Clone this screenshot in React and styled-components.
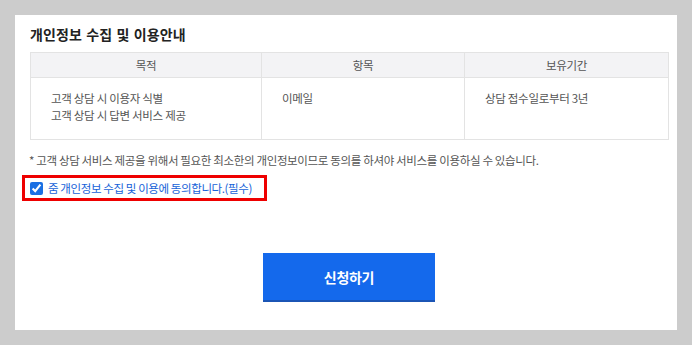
import React from "react";
import styled, { createGlobalStyle } from "styled-components";

const Global = createGlobalStyle`
  html, body { margin: 0; padding: 0; background: #cccccc; }
  body { font-family: "Noto Sans CJK KR", "Noto Sans", sans-serif; }
  * { box-sizing: border-box; }
`;

const Page = styled.div`
  padding: 15px;
  width: 692px;
  height: 345px;
`;

const Panel = styled.div`
  background: #fff;
  width: 662px;
  height: 315px;
  padding: 10px 9px 0 15px;
  display: flex;
  flex-direction: column;
`;

const Title = styled.h2`
  margin: 0 0 9px;
  font-size: 14px;
  line-height: 18px;
  font-weight: 700;
  color: #222;
  letter-spacing: 0.1px;
  word-spacing: 1px;
`;

const Table = styled.table`
  width: 638px;
  border-collapse: collapse;
  table-layout: fixed;
  font-size: 11.5px;
  color: #555;
  letter-spacing: -0.3px;
`;

const Th = styled.th`
  height: 25px;
  padding: 0;
  background: #f3f3f5;
  border: 1px solid #e3e3e3;
  font-weight: 400;
  text-align: center;
  line-height: 16px;
`;

const Td = styled.td`
  height: 62px;
  border: 1px solid #e3e3e3;
  padding: 12px 0 0 20px;
  vertical-align: top;
  line-height: 17px;
`;

const Notice = styled.p`
  margin: 12px 0 0 -1px;
  font-size: 11.5px;
  line-height: 16px;
  color: #555;
  letter-spacing: -0.35px;
`;

const AgreeBox = styled.label`
  margin: 7px 0 0 -8px;
  align-self: flex-start;
  width: 245px;
  height: 26px;
  border: 3px solid #ee0000;
  display: flex;
  align-items: center;
  gap: 5px;
  padding-left: 5px;
  font-size: 11.5px;
  color: #1662d8;
  letter-spacing: -0.4px;
  cursor: pointer;
`;

const Check = styled.input`
  width: 13px;
  height: 13px;
  margin: 0;
  accent-color: #1a6fe3;
`;

const ButtonRow = styled.div`
  width: 638px;
  display: flex;
  justify-content: center;
  margin-top: 52px;
`;

const Submit = styled.button`
  width: 172px;
  height: 49px;
  border: 0;
  border-bottom: 2px solid #1b55b5;
  background: #1469ec;
  color: #fff;
  font-family: inherit;
  font-size: 14px;
  font-weight: 700;
  letter-spacing: -0.3px;
  cursor: pointer;
`;

export default function App() {
  return (
    <>
      <Global />
      <Page>
        <Panel>
          <Title>개인정보 수집 및 이용안내</Title>
          <Table>
            <colgroup>
              <col style={{ width: "231px" }} />
              <col style={{ width: "203px" }} />
              <col style={{ width: "204px" }} />
            </colgroup>
            <thead>
              <tr>
                <Th>목적</Th>
                <Th>항목</Th>
                <Th>보유기간</Th>
              </tr>
            </thead>
            <tbody>
              <tr>
                <Td>
                  고객 상담 시 이용자 식별
                  <br />
                  고객 상담 시 답변 서비스 제공
                </Td>
                <Td>이메일</Td>
                <Td>상담 접수일로부터 3년</Td>
              </tr>
            </tbody>
          </Table>
          <Notice>
            * 고객 상담 서비스 제공을 위해서 필요한 최소한의 개인정보이므로 동의를 하셔야 서비스를 이용하실 수 있습니다.
          </Notice>
          <AgreeBox>
            <Check type="checkbox" defaultChecked />
            <span>줌 개인정보 수집 및 이용에 동의합니다.(필수)</span>
          </AgreeBox>
          <ButtonRow>
            <Submit type="button">신청하기</Submit>
          </ButtonRow>
        </Panel>
      </Page>
    </>
  );
}
